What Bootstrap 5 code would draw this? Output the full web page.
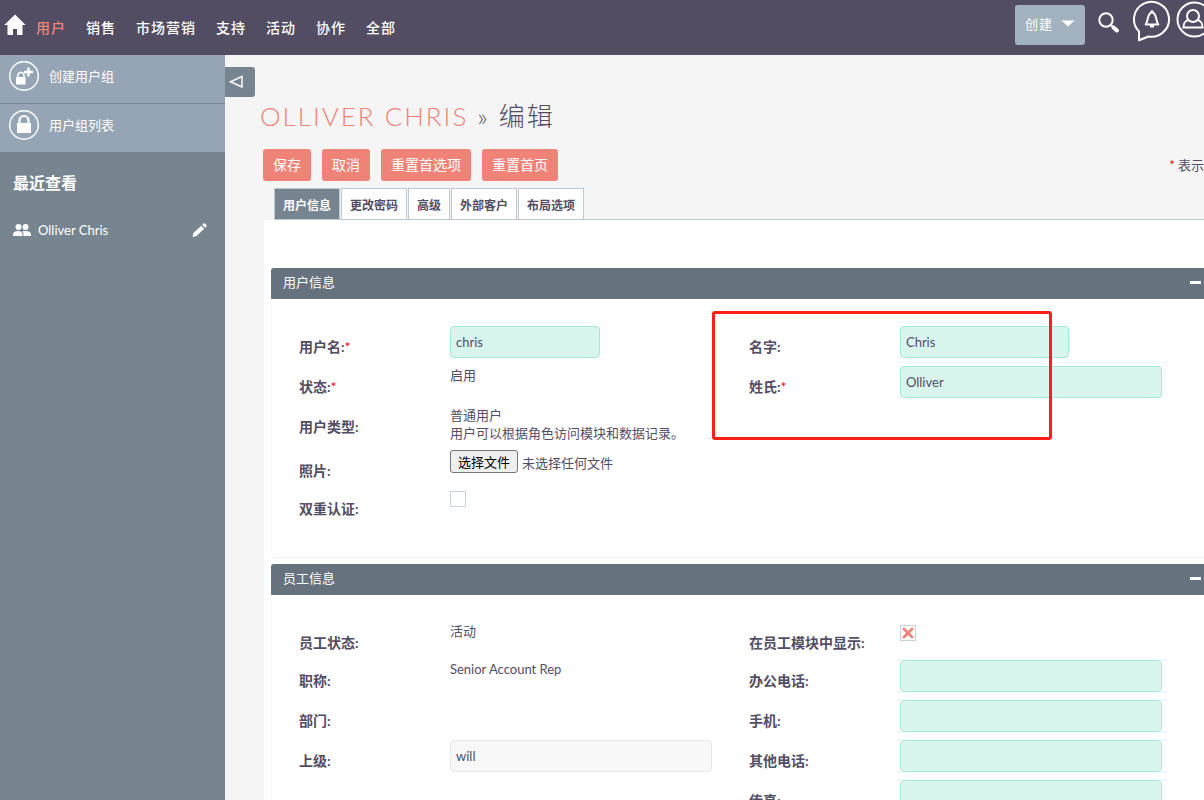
<!DOCTYPE html>
<html lang="zh-CN">
<head>
<meta charset="utf-8">
<meta name="viewport" content="width=device-width, initial-scale=1">
<title>Olliver Chris » 编辑</title>
<link href="https://cdn.jsdelivr.net/npm/bootstrap@5.3.0/dist/css/bootstrap.min.css" rel="stylesheet">
<style>
  body { font-family: Lato, "Noto Sans CJK SC", sans-serif; font-size: 13px; line-height: 18px; color: #534d64; background: #f5f5f5; overflow: hidden; min-height: 100vh; }
  a { color: inherit; text-decoration: none; }
  svg { display: block; flex: none; }

  .topbar { background: #534d64; color: #fff; height: 55px; }
  .topbar .home { margin: 14px 10px 0 4px; }
  .topbar .nav { gap: 20px; margin-top: 18px; font-size: 14px; line-height: 20px; letter-spacing: 1px; }
  .topbar .nav-link { padding: 0; color: #fff; font-weight: 500; }
  .topbar .nav-link.active { color: #f08377; }
  .topbar .tools { margin-right: -10px; }
  .topbar button { color: #fff; }
  .icon-btn { border: 0; padding: 0; background: none; }
  .btn-create { --bs-btn-bg: #a2b2bf; --bs-btn-color: #fff; --bs-btn-border-width: 0; --bs-btn-border-radius: 3px; --bs-btn-hover-bg: #8fa1af; --bs-btn-padding-x: 10px; width: 70px; height: 40px; margin: 5px 1px 0 0; padding-bottom: 9px; font-size: 13px; line-height: 18px; letter-spacing: 1px; }
  .btn-create::after { display: none; }

  .side { width: 225px; background: #778591; color: #fff; min-height: calc(100vh - 55px); }
  .side-action { height: 49px; padding: 6px 9px; gap: 10px; background: #95a5b5; line-height: 31px; }
  .side-action + .side-action { height: 48px; }
  .side-action:first-child { border-bottom: 1px solid #778591; }
  .side h2 { font-size: 16px; line-height: 24px; font-weight: 700; margin: 19px 0 0 13px; }
  .recent { margin: 25px 18px 0 13px; gap: 7px; font-size: 13px; line-height: 20px; }
  .side-toggle { position: absolute; left: 0; top: 12px; width: 30px; height: 30px; padding: 0 0 0 4px; border: 0; border-radius: 0 3px 3px 0; background: #778591; }

  .page-title { margin: 45px 0 0 35px; font-size: 26px; line-height: 32px; font-weight: 300; letter-spacing: 2px; }
  .page-title a { color: #f08377; text-transform: uppercase; }
  .actions { margin: 17px 0 0 38px; gap: 11px; }
  .btn-coral { --bs-btn-bg: #f08377; --bs-btn-color: #fff; --bs-btn-hover-bg: #de6b5f; --bs-btn-hover-color: #fff; --bs-btn-border-width: 0; --bs-btn-border-radius: 3px; --bs-btn-padding-x: 10px; --bs-btn-padding-y: 6px; font-size: 14px; line-height: 20px; }
  .req { color: #f00; }

  .tabs { margin: 7px 0 0 49px; gap: 1px; border-bottom: 1px solid #bdc8d1; flex-wrap: nowrap; }
  .tabs .nav-link { padding: 8px 8px 5px; border: 1px solid #bdc8d1; border-bottom: 0; border-radius: 0; background: #fff; color: #534d64; font-size: 12px; line-height: 17px; font-weight: 700; }
  .tabs .nav-link.active { background: #778591; color: #fff; }

  .sheet { margin-left: 39px; padding: 48px 0 0 7px; background: #fff; }
  .panel { position: relative; border-left: 1px solid #fafafa; margin-bottom: 6px; }
  .panel-head { height: 31px; margin-left: -1px; padding: 0 3px 3px 12px; background: #66727d; color: #fff; border-radius: 3px 0 0 0; }
  .panel-fold { width: 11px; height: 3px; padding: 0; border: 0; background: #fff; }
  .panel-body { padding: 27px 5px 0 27px; }
  .panel.closed-end { border-bottom: 1px solid #f0f0f0; border-bottom-left-radius: 4px; }
  .closed-end .panel-body { padding-bottom: 29px; }
  .line { min-height: 40px; }
  .line-short { min-height: 38px; }
  .line-tall { min-height: 44px; }
  .caption { padding-top: 11px; font-size: 14px; line-height: 20px; font-weight: 700; }
  .caption .req { font-weight: 400; }
  .field { padding: 0 37px 0 1px; }
  .field.wide { padding-right: 0; }
  .form-control { height: 32px; padding: 0 5px 1px; border-radius: 4px; border-color: #a5e8d6; background: #d8f5ee; color: #534d64; font-size: 13px; line-height: 20px; }
  .form-control:focus { background: #d8f5ee; color: #534d64; border-color: #a5e8d6; box-shadow: none; }
  .form-control[readonly] { background: #f8f8f8; border-color: #e2e7eb; }
  .w-user { width: 150px; }
  .w-first { width: 169px; }
  .pick { height: 23px; padding: 0 7px; border: 1px solid #767676; border-radius: 3px; background: #efefef; color: #000; line-height: 18px; }
  .form-check-input[type=checkbox] { width: 16px; height: 16px; margin: 3px 0 0; border: 1px solid #c9d2da; border-radius: 0; background-color: #fff; }
  .form-check-input:checked[type=checkbox] { background-image: url("data:image/svg+xml,%3Csvg xmlns='http://www.w3.org/2000/svg' viewBox='0 0 14 14'%3E%3Cpath d='M3 3l8 8M11 3l-8 8' stroke='%23f08377' stroke-width='2.8' stroke-linecap='round'/%3E%3C/svg%3E"); }
  .callout { position: absolute; left: 440px; top: 43px; width: 340px; height: 129px; border: 3px solid #ff1f14; border-radius: 3px; pointer-events: none; }
</style>
</head>
<body>
<header class="topbar d-flex align-items-start">
  <a class="home" href="#" aria-label="主页"><svg width="22" height="22" viewBox="0 0 22 22" fill="#fff"><path d="M11 0.500L0.300 11H3.500V21H9V15H13V21H18.500V11H21.700Z"/></svg></a>
  <nav class="nav flex-nowrap">
    <a class="nav-link active" href="#">用户</a>
    <a class="nav-link" href="#">销售</a>
    <a class="nav-link" href="#">市场营销</a>
    <a class="nav-link" href="#">支持</a>
    <a class="nav-link" href="#">活动</a>
    <a class="nav-link" href="#">协作</a>
    <a class="nav-link" href="#">全部</a>
  </nav>
  <div class="tools ms-auto d-flex align-items-start">
    <button type="button" class="btn btn-create dropdown-toggle d-flex align-items-center justify-content-between" data-bs-toggle="dropdown">创建<svg width="14" height="7" viewBox="0 0 14 7" fill="#fff"><path d="M0.500 0.500H13.500L7 6.500Z"/></svg></button>
    <button type="button" class="icon-btn ms-2 mt-2" aria-label="搜索"><svg class="m-1" width="22" height="22" viewBox="0 0 22 22" fill="none" stroke="#fff"><circle cx="8" cy="8" r="6.700" stroke-width="2"/><path d="M13 13l2 2" stroke-width="2"/><path d="M15.500 15.500l3.500 3" stroke-width="4" stroke-linecap="round"/></svg></button>
    <button type="button" class="icon-btn ms-1" aria-label="提醒"><svg class="ms-1" width="40" height="42" viewBox="-1 0 40 42" fill="none" stroke="#fff" stroke-width="2"><path d="M6 31.500A17.500 17.500 0 1 1 15.500 36.500L6 40.300Z" stroke-linejoin="round"/><path d="M12.700 24.500C15.500 21.500 14 12.500 19 12.500S22.500 21.500 25.300 24.500Z" stroke-linejoin="round"/><path d="M19 10.500v2M17 26h4" stroke-width="3"/></svg></button>
    <button type="button" class="icon-btn ms-1" aria-label="账户"><svg width="38" height="38" viewBox="0 0 38 38" fill="none" stroke="#fff" stroke-width="2"><circle cx="18.500" cy="19.500" r="17"/><circle cx="17" cy="16" r="6"/><path d="M12.500 20C9 21 7.500 22.500 7.500 27.500H26.500C26.500 22.500 25 21 21.500 20"/></svg></button>
  </div>
</header>

<div class="d-flex">
  <aside class="side flex-shrink-0">
    <a class="side-action d-flex" href="#">
      <svg width="30" height="30" viewBox="0 0 30 30" fill="none" stroke="#fff"><circle cx="15" cy="15" r="14.300" stroke-width="1.400"/><path d="M7 16h9.500v7.500H7z" fill="#fff" stroke="none"/><path d="M8.800 16v-1.500a3.100 3.100 0 0 1 6.200 0V16" stroke-width="1.500"/><path d="M19.500 6.500v9M15 11h9" stroke-width="2.400"/></svg>
      <span>创建用户组</span>
    </a>
    <a class="side-action d-flex" href="#">
      <svg width="30" height="30" viewBox="0 0 30 30" fill="none" stroke="#fff"><circle cx="15" cy="15" r="14.300" stroke-width="1.400"/><path d="M8 13h14v10H8z" fill="#fff" stroke="none"/><path d="M10.500 13v-2.500a4.500 4.500 0 0 1 9 0V13" stroke-width="2.200"/></svg>
      <span>用户组列表</span>
    </a>
    <h2>最近查看</h2>
    <div class="recent d-flex align-items-center">
      <svg width="18" height="12" viewBox="0 0 18 12" fill="#fff"><circle cx="5.500" cy="3" r="3"/><circle cx="12.500" cy="3" r="3"/><path d="M0 12V10.500C0 8.500 2 7 5 7C6.500 7 7.500 7.300 8.300 8C9 8.600 9.500 9.500 9.500 10.500V12ZM10.500 12V10.500C10.500 9 10 8 9.300 7.300C10.200 7 11.500 7 13 7C16 7 18 8.500 18 10.500V12Z"/></svg>
      <a href="#">Olliver Chris</a>
      <a class="ms-auto" href="#" aria-label="编辑"><svg width="15" height="14" viewBox="0 0 15 14" fill="#fff"><path d="M0.500 14L1.500 10L9.200 2.800L12.200 5.700L4.500 13ZM10.200 1.900L11.600 0.600C12 0.200 12.600 0.200 13 0.600L14.400 2C14.800 2.400 14.800 3 14.400 3.400L13.200 4.800Z"/></svg></a>
    </div>
  </aside>

  <main class="flex-grow-1 position-relative">
    <button type="button" class="side-toggle" aria-label="收起侧栏"><svg width="15" height="14" viewBox="0 0 15 14" fill="none" stroke="#f5f5f5" stroke-width="1.600"><path d="M13 1.500V12L1.500 6.800Z"/></svg></button>
    <h1 class="page-title"><a href="#">Olliver Chris</a> » 编辑</h1>
    <div class="actions d-flex align-items-center">
      <button type="submit" form="user-form" class="btn btn-coral">保存</button>
      <button type="button" class="btn btn-coral">取消</button>
      <button type="button" class="btn btn-coral">重置首选项</button>
      <button type="button" class="btn btn-coral">重置首页</button>
      <div class="ms-auto text-nowrap"><span class="req">*</span> 表示</div>
    </div>
    <nav class="nav tabs">
      <a class="nav-link active" href="#">用户信息</a>
      <a class="nav-link" href="#">更改密码</a>
      <a class="nav-link" href="#">高级</a>
      <a class="nav-link" href="#">外部客户</a>
      <a class="nav-link" href="#">布局选项</a>
    </nav>

    <form id="user-form" class="sheet">
      <section class="panel closed-end">
        <div class="panel-head d-flex align-items-center justify-content-between">用户信息<button type="button" class="panel-fold" aria-label="折叠用户信息"></button></div>
        <div class="panel-body">
          <div class="row g-0 line">
            <label class="col-2 caption" for="user-name">用户名:<span class="req">*</span></label>
            <div class="col-4 field"><input class="form-control w-user" id="user-name" type="text" value="chris"></div>
            <label class="col-2 caption" for="first-name">名字:</label>
            <div class="col-4 field"><input class="form-control w-first" id="first-name" type="text" value="Chris"></div>
          </div>
          <div class="row g-0 line">
            <div class="col-2 caption">状态:<span class="req">*</span></div>
            <div class="col-4 field">启用</div>
            <label class="col-2 caption" for="last-name">姓氏:<span class="req">*</span></label>
            <div class="col-4 field"><input class="form-control" id="last-name" type="text" value="Olliver"></div>
          </div>
          <div class="row g-0 line-tall">
            <div class="col-2 caption">用户类型:</div>
            <div class="col-4 field wide">普通用户<br>用户可以根据角色访问模块和数据记录。</div>
          </div>
          <div class="row g-0 line-short">
            <label class="col-2 caption" for="photo">照片:</label>
            <div class="col-4 field d-flex align-items-start gap-1">
              <input class="visually-hidden" id="photo" type="file" tabindex="-1">
              <button type="button" class="pick" onclick="document.getElementById('photo').click()">选择文件</button>
              <span class="pt-1">未选择任何文件</span>
            </div>
          </div>
          <div class="row g-0 line">
            <label class="col-2 caption" for="two-factor">双重认证:</label>
            <div class="col-4 field"><input class="form-check-input" id="two-factor" type="checkbox"></div>
          </div>
        </div>
        <div class="callout"></div>
      </section>

      <section class="panel">
        <div class="panel-head d-flex align-items-center justify-content-between">员工信息<button type="button" class="panel-fold" aria-label="折叠员工信息"></button></div>
        <div class="panel-body">
          <div class="row g-0 line-short">
            <div class="col-2 caption">员工状态:</div>
            <div class="col-4 field">活动</div>
            <label class="col-2 caption" for="show-employee">在员工模块中显示:</label>
            <div class="col-4 field"><input class="form-check-input" id="show-employee" type="checkbox" checked></div>
          </div>
          <div class="row g-0 line">
            <div class="col-2 caption">职称:</div>
            <div class="col-4 field">Senior Account Rep</div>
            <label class="col-2 caption" for="phone-work">办公电话:</label>
            <div class="col-4 field"><input class="form-control" id="phone-work" type="tel"></div>
          </div>
          <div class="row g-0 line">
            <div class="col-2 caption">部门:</div>
            <div class="col-4 field"></div>
            <label class="col-2 caption" for="phone-mobile">手机:</label>
            <div class="col-4 field"><input class="form-control" id="phone-mobile" type="tel"></div>
          </div>
          <div class="row g-0 line">
            <label class="col-2 caption" for="reports-to">上级:</label>
            <div class="col-4 field"><input class="form-control" id="reports-to" type="text" value="will" readonly></div>
            <label class="col-2 caption" for="phone-other">其他电话:</label>
            <div class="col-4 field"><input class="form-control" id="phone-other" type="tel"></div>
          </div>
          <div class="row g-0 line">
            <label class="col-2 offset-6 caption" for="phone-fax">传真:</label>
            <div class="col-4 field"><input class="form-control" id="phone-fax" type="tel"></div>
          </div>
        </div>
      </section>
    </form>
  </main>
</div>
<script src="https://cdn.jsdelivr.net/npm/bootstrap@5.3.0/dist/js/bootstrap.bundle.min.js"></script>
</body>
</html>
